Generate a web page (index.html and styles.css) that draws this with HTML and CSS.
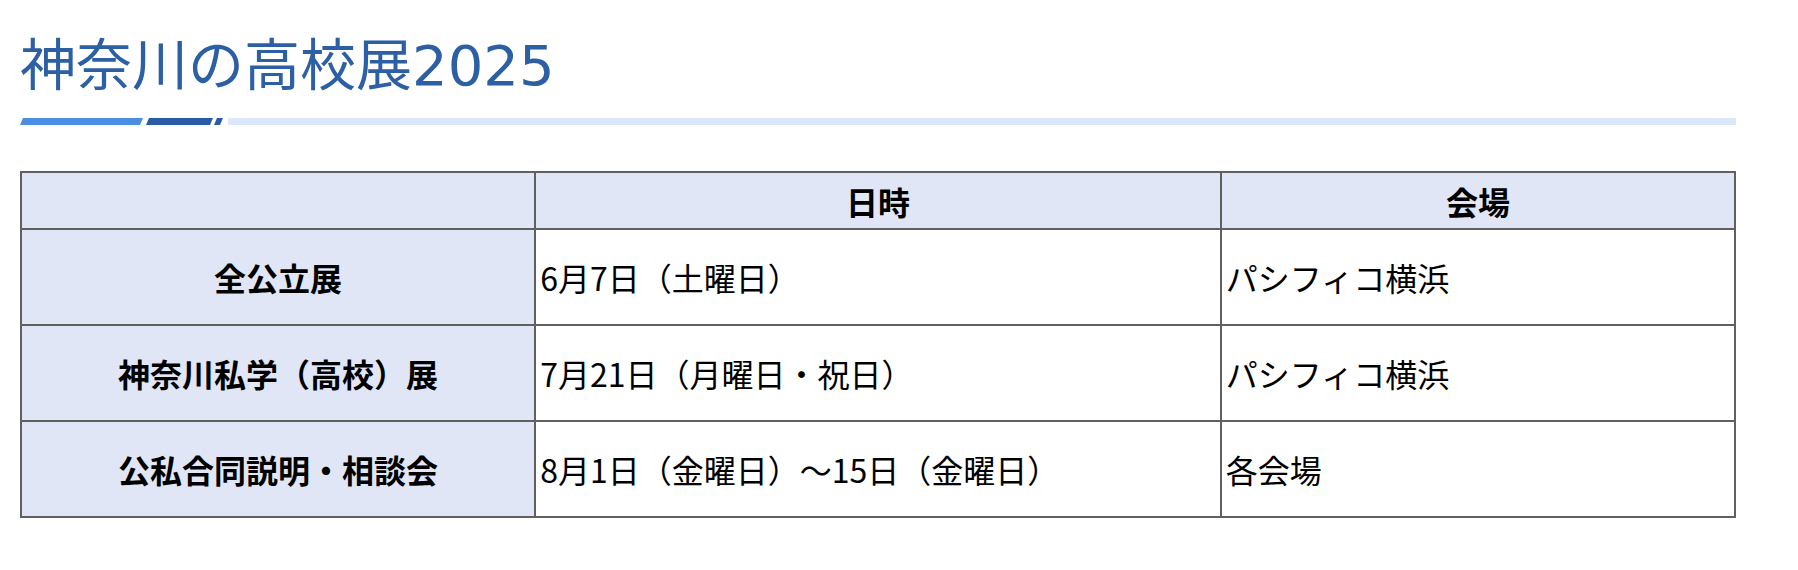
FILE: index.html
```html
<!DOCTYPE html>
<html lang="ja">
<head>
<meta charset="utf-8">
<title>神奈川の高校展2025</title>
<link rel="stylesheet" href="styles.css">
</head>
<body>
<main class="page">
  <h1 class="title">神奈川の高校展2025</h1>
  <svg class="title-bar" viewBox="0 0 1716 7" preserveAspectRatio="none" aria-hidden="true">
    <polygon points="3,0 123,0 120,7 0,7" fill="#4b8ee2"/>
    <polygon points="129,0 193,0 190,7 126,7" fill="#2a5ba6"/>
    <polygon points="197,0 203,0 200,7 194,7" fill="#2a5ba6"/>
    <rect x="208" y="0" width="1508" height="7" fill="#dbe8fa"/>
  </svg>
  <table class="schedule">
    <colgroup>
      <col class="c-name">
      <col class="c-date">
      <col class="c-place">
    </colgroup>
    <thead>
      <tr class="head-row">
        <th></th>
        <th>日時</th>
        <th>会場</th>
      </tr>
    </thead>
    <tbody>
      <tr class="body-row">
        <th>全公立展</th>
        <td>6月7日（土曜日）</td>
        <td>パシフィコ横浜</td>
      </tr>
      <tr class="body-row">
        <th>神奈川私学（高校）展</th>
        <td>7月21日（月曜日・祝日）</td>
        <td>パシフィコ横浜</td>
      </tr>
      <tr class="body-row">
        <th>公私合同説明・相談会</th>
        <td>8月1日（金曜日）～15日（金曜日）</td>
        <td>各会場</td>
      </tr>
    </tbody>
  </table>
</main>
</body>
</html>
```

FILE: styles.css
```css
html, body {
  margin: 0;
  padding: 0;
  background: #ffffff;
}

body {
  font-family: "Noto Sans CJK JP", "Noto Sans", sans-serif;
  color: #000000;
}

.page {
  padding: 0 0 0 20px;
  width: 1716px;
}

.title {
  margin: 38px 0 0 0;
  font-family: "DejaVu Sans", "Noto Sans CJK JP", sans-serif;
  font-size: 56px;
  line-height: 56px;
  font-weight: 400;
  color: #2c5fa3;
  letter-spacing: 0;
}

.title-bar {
  display: block;
  width: 1716px;
  height: 7px;
  margin-top: 24px;
}

.schedule {
  margin-top: 46px;
  width: 1716px;
  border-collapse: collapse;
  table-layout: fixed;
  font-size: 32px;
}

.c-name { width: 30%; }
.c-date { width: 40%; }
.c-place { width: 30%; }

.schedule th,
.schedule td {
  border: 2px solid #606060;
  padding: 0 4px;
  line-height: 40px;
}

.schedule th {
  background: #e1e6f6;
  font-weight: 700;
  text-align: center;
}

.schedule td {
  background: #ffffff;
  font-weight: 400;
  text-align: left;
}

.head-row th {
  height: 55px;
}

.body-row th,
.body-row td {
  height: 94px;
}
```
